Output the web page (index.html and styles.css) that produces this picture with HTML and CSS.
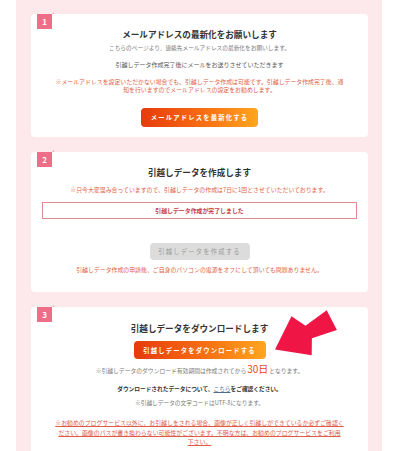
FILE: index.html
```html
<!DOCTYPE html>
<html lang="ja">
<head>
    <meta charset="UTF-8">
    <meta name="viewport" content="width=device-width, initial-scale=1.0">
    <title>引越しデータ</title>
    <link rel="stylesheet" href="styles.css">
</head>
<body>
    <div class="page">
        <section class="step step-mail">
            <span class="step-num">1</span>
            <h2 class="step-title">メールアドレスの最新化をお願いします</h2>
            <p class="lead">こちらのページより、連絡先メールアドレスの最新化をお願いします。</p>
            <p class="info">引越しデータ作成完了後にメールをお送りさせていただきます</p>
            <p class="note note-mail">※メールアドレスを設定いただかない場合でも、引越しデータ作成は可能です。引越しデータ作成完了後、通<br>知を行いますのでメールアドレスの設定をお勧めします。</p>
            <a href="#" class="btn btn-mail">メールアドレスを最新化する</a>
        </section>

        <section class="step step-create">
            <span class="step-num">2</span>
            <h2 class="step-title">引越しデータを作成します</h2>
            <p class="note note-busy">※只今大変混み合っていますので、引越しデータの作成は7日に1回とさせていただいております。</p>
            <div class="status-box">引越しデータ作成が完了しました</div>
            <span class="btn btn-disabled">引越しデータを作成する</span>
            <p class="note note-power">引越しデータ作成の申請後、ご自身のパソコンの電源をオフにして頂いても問題ありません。</p>
        </section>

        <section class="step step-download">
            <span class="step-num">3</span>
            <h2 class="step-title">引越しデータをダウンロードします</h2>
            <a href="#" class="btn btn-download">引越しデータをダウンロードする</a>
            <p class="period">※引越しデータのダウンロード有効期間は作成されてから<span class="days">30日</span>となります。</p>
            <p class="confirm">ダウンロードされたデータについて、<a href="#">こちら</a>をご確認ください。</p>
            <p class="lead charset">※引越しデータの文字コードはUTF-8になります。</p>
            <p class="warning"><a href="#">※お勧めのブログサービス以外に、お引越しをされる場合、画像が正しく引越しができているか必ずご確認く<br>ださい。画像のパスが書き換わらない可能性がございます。不明な方は、お勧めのブログサービスをご利用<br>下さい。</a></p>
            <svg class="arrow" width="337" height="60" viewBox="0 0 337 60">
                <polygon points="244,42.5 260.5,9.2 274.5,18.8 295.7,3.3 305.9,22.9 280.9,31.2 280.7,48.2" fill="#ef1646"/>
            </svg>
        </section>
    </div>
</body>
</html>
```

FILE: styles.css
```css
/* --- Base --- */
:root {
    --page-bg: #fde9eb;
    --card-bg: #ffffff;
    --badge-color: #ee6e87;
    --title-color: #333333;
    --text-color: #555555;
    --muted-color: #7a7a7a;
    --note-color: #e0603f;
    --alert-color: #c73a48;
    --font-main: "Noto Sans CJK JP", "Noto Sans", sans-serif;
}
body {
    margin: 0;
    background-color: #fff;
    font-family: var(--font-main);
}
p { margin: 0; }

.page {
    margin-left: 16px;
    width: 366px;
    min-height: 451px;
    box-sizing: border-box;
    padding: 14px 14px 0 15px;
    background-color: var(--page-bg);
    display: flex;
    flex-direction: column;
    gap: 15px;
}

/* --- Step cards --- */
.step {
    position: relative;
    background-color: var(--card-bg);
    border-radius: 4px;
    text-align: center;
    padding: 14px 0 10px;
}
.step-create { padding-bottom: 18px; }
.step-download { padding-top: 15px; padding-bottom: 20px; }

.step-num {
    position: absolute;
    top: 0;
    left: 6px;
    width: 15px;
    height: 15px;
    background-color: var(--badge-color);
    color: #fff;
    font-size: 8px;
    font-weight: bold;
    line-height: 15px;
    text-align: center;
}
.step-num::after {
    content: "";
    position: absolute;
    top: -2px;
    right: -2px;
    border-left: 2px solid transparent;
    border-bottom: 2px solid #f4a2b2;
    width: 0;
    height: 0;
}

.step-title {
    margin: 0;
    font-size: 8.6px;
    line-height: 12px;
    font-weight: bold;
    color: var(--title-color);
}

.lead {
    margin-top: 4px;
    font-size: 5.7px;
    line-height: 8px;
    color: var(--muted-color);
}
.info {
    margin-top: 9px;
    font-size: 6px;
    line-height: 8px;
    color: var(--text-color);
}
.note {
    font-size: 5.9px;
    line-height: 8px;
    color: var(--note-color);
}
.note-mail { margin-top: 9px; }
.note-busy { margin-top: 8px; }
.note-power { margin-top: 6px; }

/* --- Buttons --- */
.btn {
    display: flex;
    justify-content: center;
    align-items: center;
    margin: 0 auto;
    border-radius: 4px;
    font-size: 6.3px;
    letter-spacing: 1.2px;
    text-decoration: none;
    font-weight: bold;
    color: #fff;
    background: linear-gradient(90deg, #e63b0b 0%, #f76a12 50%, #ffa61e 100%);
}
.btn-mail {
    margin-top: 14px;
    width: 117px;
    height: 19px;
}
.btn-download {
    margin-top: 7px;
    width: 132px;
    height: 18px;
}
.btn-disabled {
    margin-top: 24px;
    width: 100px;
    height: 17px;
    background: #dcdcdc;
    color: #9a9a9a;
    font-weight: normal;
}

.status-box {
    margin: 8px 11px 0;
    height: 17px;
    box-sizing: border-box;
    border: 1px solid #e38a90;
    display: flex;
    justify-content: center;
    align-items: center;
    font-size: 5.9px;
    font-weight: bold;
    color: var(--alert-color);
}

/* --- Download step --- */
.period {
    margin-top: 4px;
    font-size: 5.8px;
    line-height: 12px;
    color: var(--muted-color);
}
.period .days {
    font-size: 10px;
    color: #e8462a;
    margin: 0 1px;
}
.confirm {
    margin-top: 8px;
    font-size: 5.7px;
    line-height: 8px;
    font-weight: bold;
    color: var(--title-color);
}
.confirm a {
    color: #4f6c8c;
    font-weight: normal;
}
.charset { margin-top: 6px; }
.warning {
    margin-top: 11px;
    font-size: 5.9px;
    line-height: 9.5px;
}
.warning a { color: #e05a48; }

.arrow {
    position: absolute;
    left: 0;
    top: 0;
}
```
